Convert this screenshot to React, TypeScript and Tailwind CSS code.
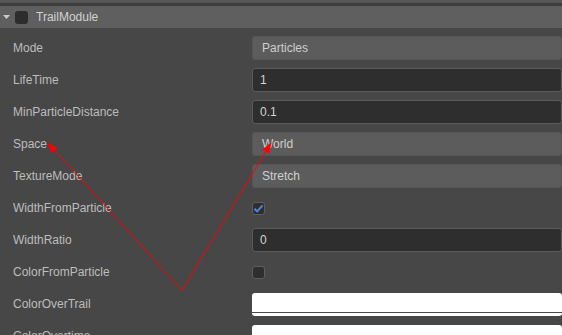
import React from 'react'

type Row =
  | { label: string; kind: 'select'; value: string }
  | { label: string; kind: 'input'; value: string }
  | { label: string; kind: 'check'; checked: boolean }
  | { label: string; kind: 'color' }

const rows: Row[] = [
  { label: 'Mode', kind: 'select', value: 'Particles' },
  { label: 'LifeTime', kind: 'input', value: '1' },
  { label: 'MinParticleDistance', kind: 'input', value: '0.1' },
  { label: 'Space', kind: 'select', value: 'World' },
  { label: 'TextureMode', kind: 'select', value: 'Stretch' },
  { label: 'WidthFromParticle', kind: 'check', checked: true },
  { label: 'WidthRatio', kind: 'input', value: '0' },
  { label: 'ColorFromParticle', kind: 'check', checked: false },
  { label: 'ColorOverTrail', kind: 'color' },
  { label: 'ColorOvertime', kind: 'color' },
]

function Field({ row }: { row: Row }) {
  if (row.kind === 'select') {
    return (
      <div className="h-6 w-[340px] rounded-[3px] border border-[#545454] bg-[#5c5c5c] pl-[9px] flex items-center text-[#cfcfcf]">
        {row.value}
      </div>
    )
  }
  if (row.kind === 'input') {
    return (
      <div className="h-6 w-[340px] rounded-[3px] border border-[#5a5a5a] bg-[#2e2e2e] pl-[7px] flex items-center text-[#d4d4d4]">
        {row.value}
      </div>
    )
  }
  if (row.kind === 'check') {
    return (
      <div className="w-[13px] h-[13px] rounded-[3px] border border-[#5e5e5e] bg-[#2e2e2e] flex items-center justify-center">
        {row.checked && (
          <svg width="11" height="11" viewBox="0 0 11 11">
            <path d="M1.5 5.8 L4.2 8.4 L9.6 2.4" fill="none" stroke="#4d86e0" strokeWidth="2" />
          </svg>
        )}
      </div>
    )
  }
  return (
    <div className="h-[23px] w-[340px] rounded-[3px] bg-white flex flex-col overflow-hidden">
      <div className="flex-1" />
      <div className="h-px bg-[#4a4a4a]" />
      <div className="h-[3px]" />
    </div>
  )
}

export default function App() {
  return (
    <div
      className="relative w-[562px] h-[335px] overflow-hidden bg-[#474747] text-[12px]"
      style={{ fontFamily: '"Liberation Sans", Arial, sans-serif' }}
    >
      <div className="h-[3px] bg-[#575757]" />
      <div className="h-[3px] bg-[#3d3d3d]" />
      {/* header */}
      <div className="h-[22px] bg-[#5f5f5f] flex items-center">
        <svg width="9" height="6" viewBox="0 0 9 6" className="ml-[2px]">
          <path d="M1 1 L8 1 L4.5 5 Z" fill="#c9c9c9" />
        </svg>
        <div className="ml-[4px] w-[13px] h-[13px] rounded-[3px] bg-[#2d2d2d]" />
        <span className="ml-[8px] text-[#d2d2d2]">TrailModule</span>
      </div>

      <div className="pt-1">
        {rows.map((row) => (
          <div key={row.label} className="h-8 flex items-center">
            <div className="w-[252px] shrink-0 pl-[13px] text-[#bdbdbd]">{row.label}</div>
            <Field row={row} />
          </div>
        ))}
      </div>

      {/* annotation arrows */}
      <svg className="absolute inset-0 pointer-events-none" width="562" height="335">
        <defs>
          <marker id="ah" markerWidth="11" markerHeight="8" refX="10" refY="4" orient="auto" markerUnits="userSpaceOnUse">
            <path d="M0 0 L11 4 L0 8 Z" fill="#ff0000" />
          </marker>
        </defs>
        <line x1="182" y1="290" x2="48" y2="143" stroke="#ff0000" strokeWidth="1" markerEnd="url(#ah)" />
        <line x1="182" y1="290" x2="271" y2="143" stroke="#ff0000" strokeWidth="1" markerEnd="url(#ah)" />
      </svg>
    </div>
  )
}
